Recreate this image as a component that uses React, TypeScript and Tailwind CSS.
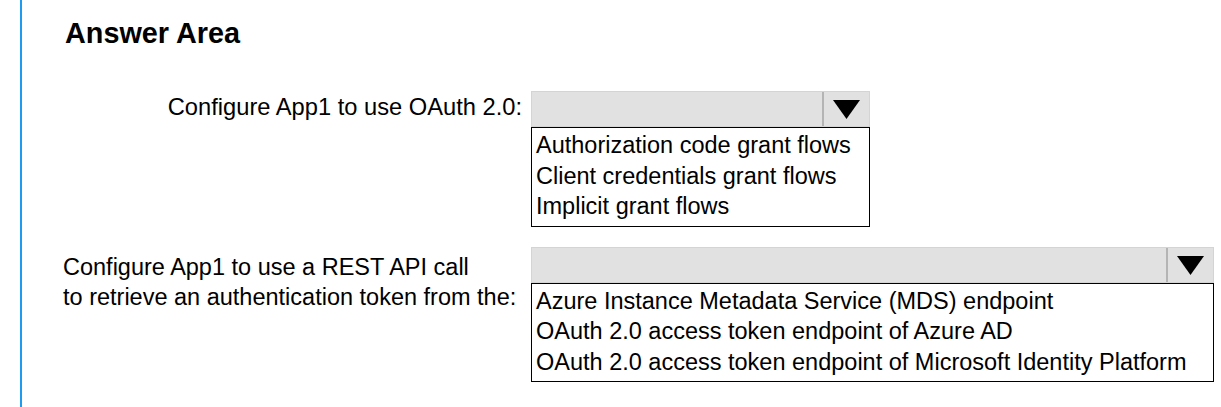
export default function App() {
  const font = { fontFamily: '"Liberation Sans", Arial, sans-serif' };
  return (
    <div className="w-[1221px] h-[407px] bg-white text-black overflow-hidden" style={font}>
      <div className="ml-[20px] h-full border-l-2 border-[#1e9bf0] pl-[41px] pt-[17px]">
        <h2 className="pl-[2px] text-[28.8px] font-bold leading-[32px]">Answer Area</h2>

        <div className="mt-[42px] flex">
          <div className="w-[468px] pr-[9px] text-right text-[23.7px] leading-[32px]">
            Configure App1 to use OAuth 2.0:
          </div>
          <Dropdown
            width="w-[339px]"
            items={[
              "Authorization code grant flows",
              "Client credentials grant flows",
              "Implicit grant flows",
            ]}
          />
        </div>

        <div className="mt-[20px] flex">
          <div className="w-[468px] pt-[5px] text-[23.5px] leading-[30px]">
            Configure App1 to use a REST API call
            <br />
            to retrieve an authentication token from the:
          </div>
          <Dropdown
            width="w-[683px]"
            items={[
              "Azure Instance Metadata Service (MDS) endpoint",
              "OAuth 2.0 access token endpoint of Azure AD",
              "OAuth 2.0 access token endpoint of Microsoft Identity Platform",
            ]}
          />
        </div>
      </div>
    </div>
  );
}

function Dropdown({ width, items }: { width: string; items: string[] }) {
  return (
    <div className={`${width} flex flex-col`}>
      <div className="h-[36px] flex bg-[#e1e1e1] border border-[#d4d4d4]">
        <div className="flex-1" />
        <div className="w-[47px] border-l-2 border-[#b4b4b4] flex items-center justify-center">
          <svg width="27" height="20" viewBox="0 0 27 20">
            <path d="M0 1 H27 L13.5 20 Z" fill="#000" />
          </svg>
        </div>
      </div>
      <div className="border border-black bg-white pl-[4px] pt-[2px] pb-[4px] text-[23.5px] leading-[30.5px]">
        {items.map((t) => (
          <div key={t}>{t}</div>
        ))}
      </div>
    </div>
  );
}
